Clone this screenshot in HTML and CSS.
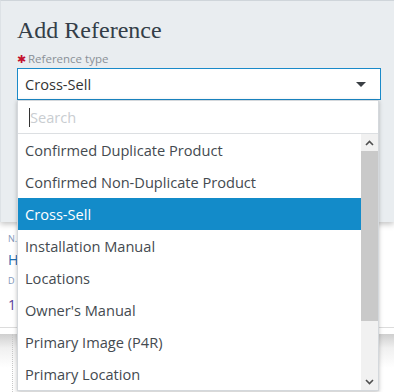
FILE: index.html
```html
<!DOCTYPE html>
<html lang="en">
<head>
  <meta charset="UTF-8" />
  <meta name="viewport" content="width=device-width, initial-scale=1.0"/>
  <title>Add Reference</title>
  <link rel="stylesheet" href="styles.css">
</head>
<body>
  <div class="page">
    <div class="record">
      <div class="field-label">N.</div>
      <div class="field-link">H</div>
      <div class="field-label second">D</div>
      <div class="field-num">1</div>
    </div>
    <div class="lower">
      <div class="dotted"></div>
    </div>
  </div>

  <div class="modal">
    <h2>Add Reference</h2>
    <div class="form-field">
      <label><span class="req">&#10033;</span>Reference type</label>
      <div class="select">
        <span>Cross-Sell</span>
        <span class="caret"></span>
      </div>

      <div class="dropdown">
        <div class="search">
          <span class="cursor"></span>
          <span class="placeholder">Search</span>
        </div>
        <div class="list-wrap">
          <ul class="options">
            <li>Confirmed Duplicate Product</li>
            <li>Confirmed Non-Duplicate Product</li>
            <li class="active">Cross-Sell</li>
            <li>Installation Manual</li>
            <li>Locations</li>
            <li>Owner's Manual</li>
            <li>Primary Image (P4R)</li>
            <li>Primary Location</li>
          </ul>
          <div class="scrollbar">
            <div class="sb-btn">
              <svg width="9" height="6" viewBox="0 0 9 6"><path d="M1 5 L4.5 1.5 L8 5" fill="none" stroke="#505050" stroke-width="1.6"/></svg>
            </div>
            <div class="sb-thumb"></div>
            <div class="sb-track"></div>
            <div class="sb-btn">
              <svg width="9" height="6" viewBox="0 0 9 6"><path d="M1 1 L4.5 4.5 L8 1" fill="none" stroke="#505050" stroke-width="1.6"/></svg>
            </div>
          </div>
        </div>
      </div>
    </div>
  </div>
</body>
</html>
```

FILE: styles.css
```css
body {
  margin: 0;
  font-family: 'Open Sans', 'Noto Sans', sans-serif;
  background: #fff;
  width: 394px;
  height: 392px;
  overflow: hidden;
  position: relative;
}
.page {
  padding-top: 232px;
}
.record {
  padding: 0 8px;
  height: 95px;
  border-bottom: 1px solid #dcdcdc;
}
.field-label {
  font-size: 9px;
  color: #7f96b8;
  line-height: 14px;
  text-transform: uppercase;
}
.field-label.second {
  margin-top: 4px;
}
.field-link {
  margin-top: 4px;
  font-size: 14px;
  color: #1f6fb2;
  line-height: 20px;
}
.field-num {
  margin-top: 7px;
  font-size: 14px;
  color: #5a3f9a;
  line-height: 20px;
}
.lower {
  height: 70px;
  background: linear-gradient(to bottom, #cfcfcf, #f0f0f0 14px, #fff 34px);
  padding-left: 12px;
}
.dotted {
  height: 100%;
  border-left: 1px dotted #c8c8c8;
  margin-top: 6px;
}

/* modal over the page */
.modal {
  position: absolute;
  top: 0;
  left: 0;
  right: 0;
  height: 222px;
  background: #e9edf0;
  border-top: 1px solid #cfd5da;
  border-left: 1px solid #dde2e6;
  box-sizing: border-box;
  box-shadow: 0 2px 6px rgba(0, 0, 0, 0.25);
  padding: 0 13px 0 16px;
}
h2 {
  margin: 0;
  padding-top: 15px;
  font-family: 'Liberation Serif', serif;
  font-weight: normal;
  font-size: 24px;
  line-height: 28px;
  color: #343e48;
}
.form-field {
  position: relative;
  margin-top: 8px;
}
label {
  display: flex;
  align-items: center;
  font-size: 11.5px;
  line-height: 14px;
  color: #8a9097;
}
.req {
  color: #c4122f;
  font-size: 11px;
  line-height: 14px;
  margin-right: 2px;
}
.select {
  margin-top: 2px;
  height: 32px;
  box-sizing: border-box;
  border: 1px solid #1a8ac9;
  background: #fff;
  display: flex;
  align-items: center;
  justify-content: space-between;
  padding: 0 14px 0 7px;
  font-size: 14.6px;
  color: #333;
}
.caret {
  width: 0;
  height: 0;
  border-left: 5px solid transparent;
  border-right: 5px solid transparent;
  border-top: 5px solid #3a3f44;
}

/* open dropdown */
.dropdown {
  position: absolute;
  top: 100%;
  left: 0;
  width: 362px;
  background: #fff;
  border: 1px solid #d4d8dc;
  box-sizing: border-box;
  box-shadow: 0 1px 4px rgba(0, 0, 0, 0.25);
  z-index: 5;
}
.search {
  height: 32px;
  border-bottom: 1px solid #dcdfe2;
  display: flex;
  align-items: center;
  padding-left: 11px;
  font-size: 14.6px;
}
.cursor {
  width: 1px;
  height: 19px;
  background: #333;
}
.placeholder {
  color: #c9cdd1;
}
.list-wrap {
  display: flex;
  height: 256px;
  overflow: hidden;
}
.options {
  list-style: none;
  margin: 0;
  padding: 0;
  flex: 1;
}
.options li {
  height: 32px;
  line-height: 32px;
  padding-left: 7px;
  font-size: 14.6px;
  color: #444a50;
}
.options li.active {
  background: #138bc9;
  color: #fff;
}
.scrollbar {
  width: 17px;
  display: flex;
  flex-direction: column;
  background: #f1f1f1;
}
.sb-btn {
  height: 17px;
  display: flex;
  align-items: center;
  justify-content: center;
}
.sb-thumb {
  height: 170px;
  background: #c9c9c9;
}
.sb-track {
  flex: 1;
}
```
